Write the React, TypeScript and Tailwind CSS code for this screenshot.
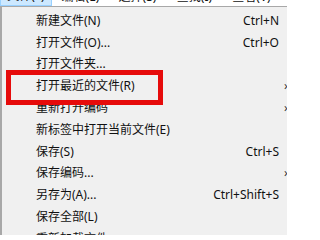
import React from "react";

const items: { label: string; shortcut?: string; arrow?: boolean }[] = [
  { label: "新建文件(N)", shortcut: "Ctrl+N" },
  { label: "打开文件(O)...", shortcut: "Ctrl+O" },
  { label: "打开文件夹..." },
  { label: "打开最近的文件(R)", arrow: true },
  { label: "重新打开编码", arrow: true },
  { label: "新标签中打开当前文件(E)" },
  { label: "保存(S)", shortcut: "Ctrl+S" },
  { label: "保存编码...", arrow: true },
  { label: "另存为(A)...", shortcut: "Ctrl+Shift+S" },
  { label: "保存全部(L)" },
  { label: "重新加载文件" },
];

const bar = ["编辑(E)", "选择(S)", "查找(I)", "查看(V)", "Nav"];

export default function App() {
  return (
    <div
      className="relative w-[287px] h-[235px] overflow-hidden bg-[#f0f0f0] text-[#111]"
      style={{ fontFamily: '"Noto Sans", "Noto Sans CJK SC", sans-serif' }}
    >
      <div className="flex h-[6px] bg-white items-end overflow-hidden">
        <div className="w-[52px] h-[20px] shrink-0 bg-[#cce8ff] border border-[#99d1ff] flex items-end justify-center text-[12px] leading-[16px] pb-[1px]">
          文件(F)
        </div>
        {bar.map((b) => (
          <div key={b} className="w-[57px] h-[20px] shrink-0 flex items-end justify-center text-[12px] leading-[16px] pb-[1px]">
            {b}
          </div>
        ))}
      </div>
      <div className="border-l-2 border-t border-[#a8a8a8] h-full pt-[3px]">
        {items.map((it) => (
          <div key={it.label} className="flex items-center h-[21.8px] pl-[34px] text-[12px]">
            <span className="flex-1 whitespace-nowrap">{it.label}</span>
            {it.shortcut && <span className="pr-[8px] whitespace-nowrap">{it.shortcut}</span>}
            {it.arrow && (
              <span className="w-[8px] overflow-visible relative left-[5px] text-[12px] text-[#333]">
                ›
              </span>
            )}
          </div>
        ))}
      </div>
      <div className="absolute left-[6px] top-[70px] w-[157px] h-[35px] border-[5px] border-[#e60b0b]" />
    </div>
  );
}
